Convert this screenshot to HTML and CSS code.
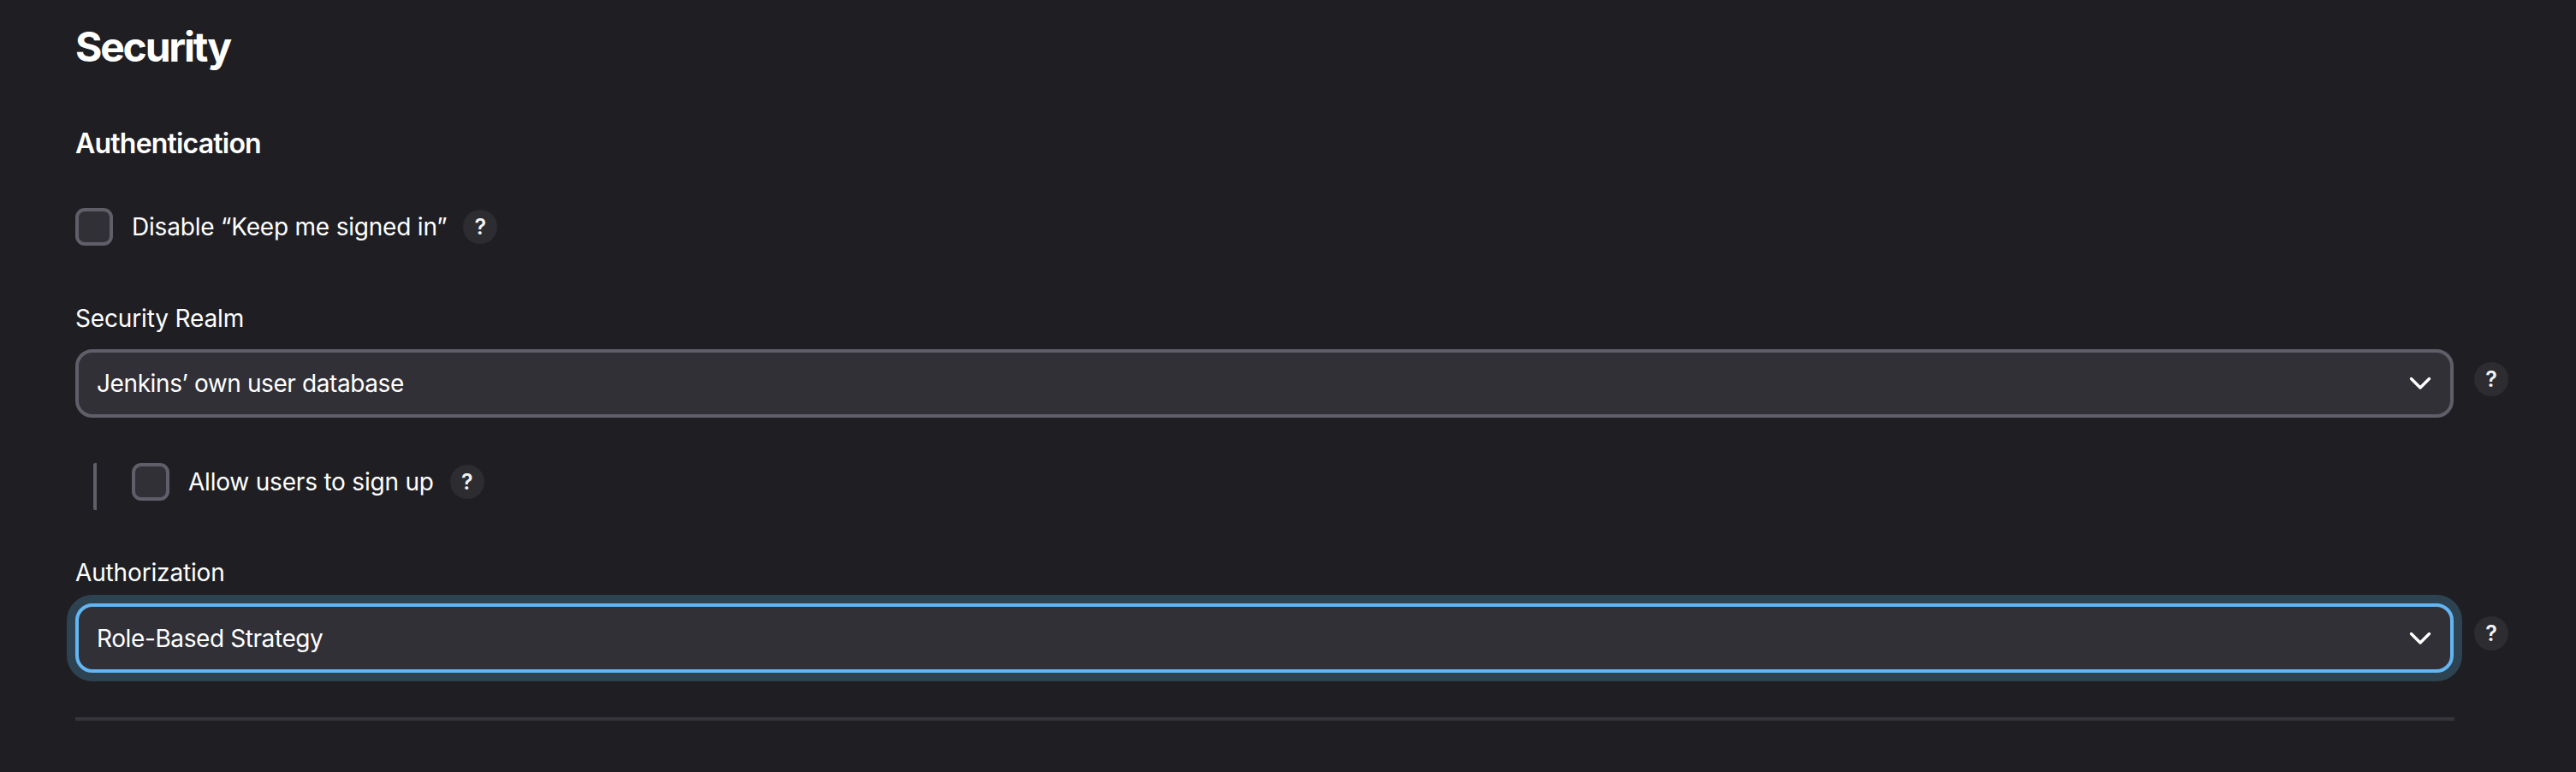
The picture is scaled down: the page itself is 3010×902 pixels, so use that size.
FILE: index.html
```html
<!DOCTYPE html>
<html lang="en">
<head>
<meta charset="utf-8">
<title>Security</title>
<link rel="stylesheet" href="styles.css">
</head>
<body>
<main class="page">
  <h1 class="title">Security</h1>
  <h2 class="section">Authentication</h2>

  <div class="check-row top-check">
    <span class="checkbox"></span>
    <span class="check-label">Disable “Keep me signed in”</span>
    <span class="help">?</span>
  </div>

  <div class="field realm">
    <div class="field-label">Security Realm</div>
    <div class="field-row">
      <div class="select">
        <span class="select-text">Jenkins’ own user database</span>
        <svg class="chevron" viewBox="0 0 26 16" width="26" height="16"><polyline points="2.5,2.5 13,13 23.5,2.5" fill="none" stroke="#ffffff" stroke-width="3.4" stroke-linecap="round" stroke-linejoin="round"/></svg>
      </div>
      <span class="help field-help">?</span>
    </div>
  </div>

  <div class="nested">
    <div class="check-row">
      <span class="checkbox"></span>
      <span class="check-label">Allow users to sign up</span>
      <span class="help">?</span>
    </div>
  </div>

  <div class="field authz">
    <div class="field-label">Authorization</div>
    <div class="field-row">
      <div class="select focused">
        <span class="select-text">Role-Based Strategy</span>
        <svg class="chevron" viewBox="0 0 26 16" width="26" height="16"><polyline points="2.5,2.5 13,13 23.5,2.5" fill="none" stroke="#ffffff" stroke-width="3.4" stroke-linecap="round" stroke-linejoin="round"/></svg>
      </div>
      <span class="help field-help">?</span>
    </div>
  </div>

  <div class="divider"></div>
</main>
</body>
</html>
```

FILE: styles.css
```css
html, body {
  margin: 0;
  padding: 0;
  background: #1f1f23;
}

body {
  font-family: Inter, "Noto Sans", "Liberation Sans", sans-serif;
  color: #ffffff;
  width: 3010px;
  height: 902px;
  overflow: hidden;
}

.page {
  padding: 26px 79px 0 88px;
}

.title {
  margin: 0;
  font-size: 48px;
  line-height: 58px;
  font-weight: 700;
  letter-spacing: -2.2px;
}

.section {
  margin: 64px 0 0 0;
  font-size: 32px;
  line-height: 40px;
  font-weight: 600;
  letter-spacing: -0.8px;
}

.check-row {
  display: flex;
  align-items: center;
  height: 44px;
}

.top-check {
  margin-top: 55px;
}

.checkbox {
  box-sizing: border-box;
  width: 44px;
  height: 44px;
  border: 4px solid #5f5e69;
  border-radius: 11px;
  background: #313037;
  flex: none;
}

.check-label {
  margin-left: 22px;
  font-size: 28px;
  line-height: 44px;
  font-weight: 400;
  letter-spacing: -0.2px;
}

.help {
  box-sizing: border-box;
  width: 40px;
  height: 40px;
  border-radius: 50%;
  background: #2c2c31;
  color: #f2f2f2;
  font-size: 25px;
  font-weight: 600;
  line-height: 40px;
  text-align: center;
  margin-left: 19px;
  flex: none;
}

.field {
  display: flex;
  flex-direction: column;
}

.realm {
  margin-top: 67px;
}

.authz {
  margin-top: 55px;
}

.field-label {
  font-size: 28px;
  line-height: 36px;
  font-weight: 400;
  letter-spacing: -0.15px;
}

.field-row {
  display: flex;
  align-items: flex-start;
  margin-top: 18px;
}

.select {
  box-sizing: border-box;
  flex: 1;
  height: 80px;
  display: flex;
  align-items: center;
  justify-content: space-between;
  padding: 0 22px 0 21px;
  border: 4px solid #5f5e69;
  border-radius: 20px;
  background: #313037;
}

.select.focused {
  height: 81px;
  border-color: #63b6f3;
  box-shadow: 0 0 0 10px #2e4352;
}

.select-text {
  font-size: 28px;
  line-height: 36px;
  font-weight: 400;
  letter-spacing: -0.4px;
}

.chevron {
  flex: none;
  display: block;
}

.field-help {
  margin-left: 24px;
  margin-top: 15px;
}

.nested {
  margin: 53px 0 0 21px;
  padding: 0 0 11px 41px;
  border-left: 4px solid #5f5e69;
  border-radius: 2px;
}

.divider {
  margin: 52px 63px 0 0;
  height: 4px;
  background: #35353b;
}
```
